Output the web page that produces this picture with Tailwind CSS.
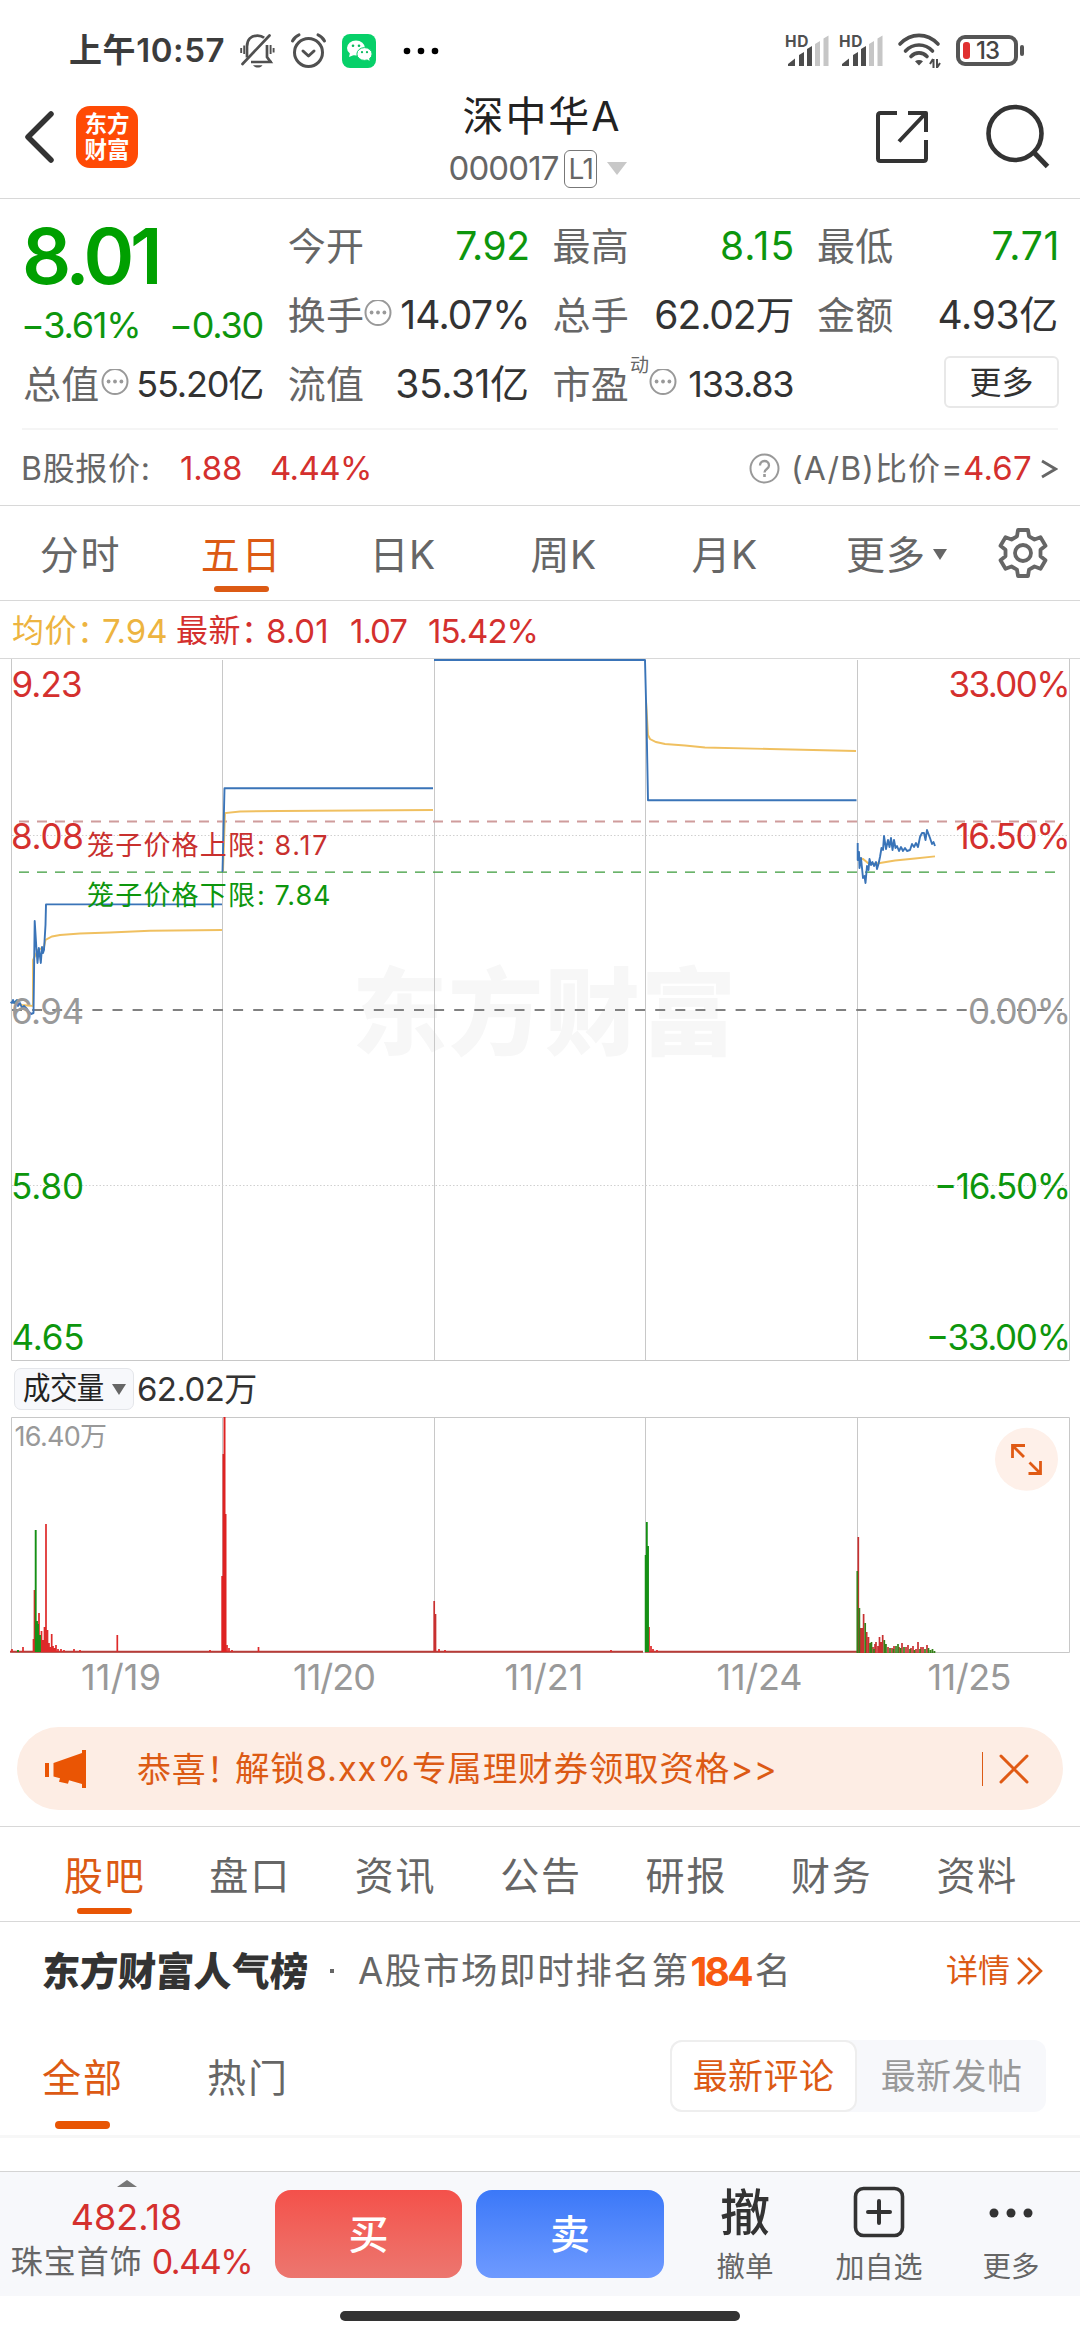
<!DOCTYPE html>
<html lang="zh-CN">
<head>
<meta charset="utf-8">
<meta name="viewport" content="width=1080">
<title>深中华A 000017</title>
<script src="https://cdn.jsdelivr.net/npm/@tailwindcss/browser@4"></script>
</head>
<body class="bg-white">
<div class="flex h-[2340px] w-[1080px] flex-col overflow-hidden whitespace-nowrap bg-white font-['Inter','Noto_Sans_CJK_SC',sans-serif] leading-none text-[#333]">

  <!-- status bar -->
  <div class="flex h-[90px] shrink-0 items-center pt-[11px]">
    <span class="ml-[69px] w-[170px] text-[33px] font-semibold tracking-[0.6px] text-[#3c3c3c]">上午10:57</span>
    <svg class="h-[36px] w-[36px]" viewBox="0 0 36 36" fill="none" stroke="#505050" stroke-width="2.7">
      <path d="M8 24.5V13.5C8 6.5 12 2.6 18.5 2.6c3 0 5 .8 6.6 2.2M28 12v12l3.6 5H13.5M33 29H12" />
      <path d="M30.5 2.5 3.5 31" stroke-linecap="round"/>
      <path d="M14 32.2h9.500c-1 1.500-2.600 2.300-4.700 2.300s-3.800-.8-4.800-2.300z" fill="#505050" stroke="none"/>
      <path d="M2.200 15v5M5.200 12.500v8.500M31.600 12v9M34.600 15v4.500" stroke-width="1.900"/>
    </svg>
    <svg class="ml-[15px] h-[37px] w-[37px]" viewBox="0 0 37 37" fill="none" stroke="#505050" stroke-width="3" stroke-linecap="round" stroke-linejoin="round">
      <circle cx="18.500" cy="20.500" r="14"/><path d="m13 19 5.500 5 5.500-5M2.500 9C4 6 6 4 9 2.800M34.500 9C33 6 31 4 28 2.800"/>
    </svg>
    <svg class="ml-[15px] h-[34px] w-[34px]" viewBox="0 0 34 34">
      <rect width="34" height="34" rx="8" fill="#07d069"/>
      <ellipse cx="14" cy="14" rx="9" ry="7.600" fill="#fff"/><path d="m8 19-1 4 5-2z" fill="#fff"/>
      <ellipse cx="22.500" cy="20" rx="7.600" ry="6.400" fill="#fff" stroke="#07d069" stroke-width="1"/><path d="m25 25 2.500 2-.5-3.500z" fill="#fff"/>
      <g fill="#07b95d"><circle cx="11" cy="11.700" r="1.300"/><circle cx="17" cy="11.700" r="1.300"/><circle cx="20" cy="18.200" r="1.100"/><circle cx="25" cy="18.200" r="1.100"/></g>
    </svg>
    <svg class="ml-[27px] h-[8px] w-[36px]" viewBox="0 0 36 8" fill="#000"><circle cx="4" cy="4" r="3.300"/><circle cx="18" cy="4" r="3.300"/><circle cx="32" cy="4" r="3.300"/></svg>
    <svg class="ml-[345px] h-[38px] w-[100px]" viewBox="-2 -3 100 38">
      <g id="sig">
        <text x="-1" y="12" font-size="15.500" font-weight="700" fill="#505050" textLength="23.500">HD</text>
        <path d="M2 31v-2l7-5.500V31zM13 31V20l5-3v14zM21 31V14l5-3v20z" fill="#4c4c4c"/>
        <path d="M29 31V9l5-3v25zM37.500 31V3.500l5-3V31z" fill="#c6c6c6"/>
      </g>
      <use href="#sig" x="54"/>
    </svg>
    <svg class="ml-[13px] h-[36px] w-[44px]" viewBox="0 0 44 36" fill="none" stroke="#4c4c4c" stroke-width="3.600" stroke-linecap="round">
      <path d="M3 11.500C14 0 30 0 41 11.500" transform="translate(0 -.5)"/><path d="M8.500 18c7.500-8 19.500-8 27 0M14 23.500c4.500-4.800 11.500-4.800 16 0"/>
      <path d="m22 32.500-4-4.200c2.400-1.900 5.600-1.900 8 0z" fill="#4c4c4c" stroke="none"/>
      <path d="M36.500 26v9M36 26l-3 5M40 35v-9M40.500 34l2.500-4" stroke-width="2" stroke-linecap="butt"/>
    </svg>
    <div class="ml-[15px] flex h-[31px] w-[62px] items-center rounded-[9px] border-4 border-[#555] pl-[3px]">
      <span class="h-[17px] w-[7px] rounded-[3px] bg-[#e03030]"></span>
      <span class="ml-[6px] text-[24px] font-medium tracking-[-0.9px] text-[#444]">13</span>
    </div>
    <span class="ml-[2px] h-[11px] w-[4px] rounded-[2px] bg-[#555]"></span>
  </div>

  <!-- title bar -->
  <div class="flex h-[109px] shrink-0 border-b border-[#d8d8d8]">
    <div class="flex h-[94px] w-[300px] items-center">
      <svg class="ml-[22px] h-[56px] w-[36px]" viewBox="0 0 36 56" fill="none" stroke="#333" stroke-width="5.500" stroke-linecap="round" stroke-linejoin="round"><path d="M29 5 6 28l23 23"/></svg>
      <div class="ml-[18px] flex h-[62px] w-[62px] flex-col items-center justify-center gap-[3px] rounded-[14px] bg-[#ff4a05] text-[22.5px] font-bold text-white"><span>东方</span><span>财富</span></div>
    </div>
    <div class="flex w-[480px] flex-col items-center">
      <div class="flex h-[52px] items-center pl-[4px] text-[41px] tracking-[1.9px] text-[#222]">深中华A</div>
      <div class="flex h-[53px] items-center pr-[4px]">
        <span class="text-[33px] tracking-[-0.9px] text-[#666]">000017</span>
        <span class="ml-[6px] flex h-[38px] w-[33px] items-center justify-center rounded-[6px] border border-[#777] text-[28px] tracking-[-0.5px] text-[#666]">L1</span>
        <svg class="ml-[10px] h-[13px] w-[20px]" viewBox="0 0 20 13"><path d="M0 0h20L10 13z" fill="#c8c8c8"/></svg>
      </div>
    </div>
    <div class="flex h-[94px] w-[300px] items-center">
      <svg class="ml-[94px] h-[56px] w-[56px]" viewBox="0 0 56 56" fill="none" stroke="#333" stroke-width="4"><path d="M23 4H6.500Q4 4 4 6.500v43Q4 52 6.500 52h43q2.500 0 2.500-2.500V31M34 4h18v19M51 5 25 32.500" stroke-linejoin="round"/></svg>
      <svg class="ml-[54px] h-[66px] w-[66px]" viewBox="0 0 66 66" fill="none" stroke="#333" stroke-width="4.600"><circle cx="31" cy="29.500" r="26.500"/><path d="m49.500 48 14 14.500" stroke-width="5"/></svg>
    </div>
  </div>

  <!-- quote -->
  <div class="grid h-[230px] shrink-0 grid-cols-[240px_240px_240px_240px] gap-x-[24.7px] pl-[23px] pt-[12px] text-[38px] tracking-[0.3px] text-[#666]">
    <div>
      <div class="-ml-px flex h-[90px] items-center text-[77px] font-semibold tracking-[-4.3px] text-[#00a000]">8.01</div>
      <div class="flex h-[48px] items-center justify-between text-[36px] tracking-[-1.2px] text-[#0d960d]"><span class="-ml-[2px]">−3.61%</span><span>−0.30</span></div>
      <div class="flex h-[69px] items-center"><span>总值</span>
        <svg class="ml-[1px] h-[29px] w-[28px]" viewBox="0 0 28 29"><circle cx="14" cy="12.500" r="12.500" fill="none" stroke="#999" stroke-width="2"/><g fill="#999"><circle cx="7.600" cy="12.500" r="1.900"/><circle cx="14" cy="12.500" r="1.900"/><circle cx="20.400" cy="12.500" r="1.900"/></g></svg>
        <span class="ml-auto text-[36px] tracking-[-1.2px] text-[#333]">55.20亿</span></div>
    </div>
    <div>
      <div class="flex h-[69px] items-center justify-between"><span>今开</span><span class="-mr-[2px] text-[39px] tracking-[-0.4px] text-[#0d960d]">7.92</span></div>
      <div class="flex h-[69px] items-center"><span>换手</span>
        <svg class="h-[29px] w-[28px]" viewBox="0 0 28 29"><circle cx="14" cy="12.500" r="12.500" fill="none" stroke="#999" stroke-width="2"/><g fill="#999"><circle cx="7.600" cy="12.500" r="1.900"/><circle cx="14" cy="12.500" r="1.900"/><circle cx="20.400" cy="12.500" r="1.900"/></g></svg>
        <span class="-mr-[2px] ml-auto text-[39px] tracking-[-0.8px] text-[#333]">14.07%</span></div>
      <div class="flex h-[69px] items-center justify-between"><span>流值</span><span class="-mr-px text-[39px] tracking-[-0.4px] text-[#333]">35.31亿</span></div>
    </div>
    <div>
      <div class="flex h-[69px] items-center justify-between"><span>最高</span><span class="-mr-[3px] text-[39px] tracking-[1.2px] text-[#0d960d]">8.15</span></div>
      <div class="flex h-[69px] items-center justify-between"><span>总手</span><span class="-mr-px text-[39px] tracking-[-1.1px] text-[#333]">62.02万</span></div>
      <div class="flex h-[69px] items-center"><span>市盈</span><span class="-mt-[36px] ml-px text-[19px]">动</span>
        <svg class="h-[29px] w-[28px]" viewBox="0 0 28 29"><circle cx="14" cy="12.500" r="12.500" fill="none" stroke="#999" stroke-width="2"/><g fill="#999"><circle cx="7.600" cy="12.500" r="1.900"/><circle cx="14" cy="12.500" r="1.900"/><circle cx="20.400" cy="12.500" r="1.900"/></g></svg>
        <span class="-mr-px ml-auto text-[36px] tracking-[-1.2px] text-[#333]">133.83</span></div>
    </div>
    <div>
      <div class="flex h-[69px] items-center justify-between"><span>最低</span><span class="-mr-[3px] text-[39px] tracking-[0.7px] text-[#0d960d]">7.71</span></div>
      <div class="flex h-[69px] items-center justify-between"><span>金额</span><span class="-mr-px text-[39px] tracking-[-0.3px] text-[#333]">4.93亿</span></div>
      <div class="flex h-[69px] items-center justify-end"><span class="-mr-[2px] -mt-[3px] flex h-[52px] w-[115px] items-center justify-center rounded-[6px] border-2 border-[#e8e8e8] pt-[2px] text-[32px] tracking-normal text-[#333]">更多</span></div>
    </div>
  </div>

  <!-- B share row -->
  <div class="mx-[22px] -mt-px h-[2px] shrink-0 bg-[#f5f5f5]"></div>
  <div class="flex h-[76px] shrink-0 items-center border-b border-[#d8d8d8] pt-[2px] text-[33px] text-[#666]">
    <span class="ml-[21px] w-[159px] text-[32px] tracking-[0.7px]">B股报价:</span>
    <span class="w-[90px] tracking-[-0.2px] text-[#d4302e]">1.88</span>
    <span class="tracking-[-0.6px] text-[#d4302e]">4.44%</span>
    <svg class="ml-auto h-[31px] w-[31px]" viewBox="0 0 31 31" fill="none" stroke="#999" stroke-width="2"><circle cx="15.500" cy="15.500" r="14"/><path d="M11 12.500c0-6 9-6 9 0 0 3.500-4.500 3.500-4.500 7" stroke-width="2.300"/><path d="M15.500 21v3" stroke-width="2.600"/></svg>
    <span class="ml-[11px] w-[172px] text-[32px] tracking-[1.1px]">(A/B)比价=</span>
    <span class="w-[77px] tracking-[0.2px] text-[#d4302e]">4.67</span>
    <svg class="mr-[22px] h-[24px] w-[18px]" viewBox="0 0 18 24" fill="none" stroke="#666" stroke-width="2.800"><path d="m2 4 13.500 8L2 20"/></svg>
  </div>

  <!-- period tabs -->
  <div class="flex h-[95px] shrink-0 items-center border-b border-[#d8d8d8] pt-[3px] text-[39px] tracking-[1.8px] text-[#666]">
    <div class="w-[161px] text-center">分时</div>
    <div class="relative w-[161px] text-center text-[#dc5a14]">五日<span class="absolute -bottom-[18px] left-[53px] h-[6px] w-[55px] rounded-full bg-[#dc5a14]"></span></div>
    <div class="w-[161px] text-center tracking-[0.5px]">日K</div>
    <div class="w-[161px] text-center tracking-[0.5px]">周K</div>
    <div class="w-[161px] text-center tracking-[0.5px]">月K</div>
    <div class="ml-[41px] tracking-[1px]">更多</div>
    <svg class="ml-[7px] h-[11px] w-[14px]" viewBox="0 0 14 11"><path d="M0 0h14L7 11z" fill="#666"/></svg>
    <svg class="-mt-[3px] ml-[51px] h-[50px] w-[50px]" viewBox="0 0 50 50" fill="none" stroke="#666" stroke-width="3.800" stroke-linejoin="round">
      <path d="M20 3.500h10l1 6.300 5.500 3.200 6-2.300 5 8.600-5 4v6.400l5 4-5 8.600-6-2.300-5.500 3.200-1 6.300H20l-1-6.300-5.500-3.200-6 2.300-5-8.600 5-4v-6.400l-5-4 5-8.600 6 2.300L19 9.800z" transform="translate(0 -1.500)"/><circle cx="25" cy="25" r="8"/>
    </svg>
  </div>

  <!-- latest values -->
  <div class="flex h-[57px] shrink-0 items-center pt-[3px] text-[33px] text-[#d4302e]">
    <span class="ml-[12px] w-[90px] text-[32px] tracking-[0.5px] text-[#edb440]">均价：</span><span class="w-[74px] text-[#edb440]">7.94</span>
    <span class="w-[90px] text-[32px] tracking-[0.5px]">最新：</span><span class="w-[84px]">8.01</span><span class="w-[78px] tracking-[-1px]">1.07</span><span class="tracking-[-1px]">15.42%</span>
  </div>

  <!-- price chart -->
  <svg class="h-[706px] w-[1080px] shrink-0" viewBox="0 658 1080 706">
    <text x="352" y="1048" class="fill-[#f7f7f7] text-[95px] font-black" textLength="384">东方财富</text>
    <g stroke="#c8c8c8" stroke-width="1" fill="none">
      <path d="M0 658.500h1080" stroke="#d8d8d8"/>
      <path d="M11.500 659V1360.500H1069.500V659M222.500 660V1360M434.500 660V1360M645.500 660V1360M857.500 660V1360"/>
      <path d="M12 835.500H1069M12 1185.500H1069" stroke-dasharray="1.500 2" stroke="#d0d0d0"/>
    </g>
    <path d="M12 1010H1062" stroke="#808080" stroke-width="2" stroke-dasharray="10 10.100" fill="none"/>
    <path d="M19 821.600H1055" stroke="#cf9c9c" stroke-width="2" stroke-dasharray="10 8" fill="none"/>
    <path d="M19 872.200H1055" stroke="#3a9a3a" stroke-width="1.300" stroke-dasharray="10 8" fill="none"/>
    <g fill="none" stroke="#f0c060" stroke-width="1.900">
      <path d="M12 1002 22 1005 33 1006V960L38 950 44 947 45.500 940 52 936.500 60 935 80 933.500 110 932.500 150 930.700 222 930"/>
      <path d="M223 872 225 813 240 811.500 280 811 433 810"/>
      <path d="M646 700 648 735 650 739 656 742 665 744 685 745.500 705 747.500 770 749 856 751"/>
      <path d="M858 858 863 859 868 863 874 864 880 863 895 860.500 915 858.500 935 856.400"/>
    </g>
    <g fill="none" stroke="#3a74b8" stroke-width="1.900" stroke-linejoin="round">
      <path d="M10.500 1002 12 1003 13 1000 14 1003 16 1001 17 1000 18 1006 20 1003 22 1008 24 1006 27 1009 29 1012 31 1014 33.500 1013 34.700 921 36.500 950 37.500 963 38.800 948 39.800 955 40.800 963 42 947 43 953 44 950 45.500 925 46 904.400H222"/>
      <path d="M222.500 872 224.500 788.300H433"/>
      <path d="M434 660H645L646.500 720 648 800.300H856.500" />
      <path d="M857.700 843V860L859 852 859.500 868 861 858 862 868 863 878 864.500 876 865.500 883 867 866 868.500 870 869.500 859 871 865 872.500 862 874 866 876 862 877 869 878.500 864 880 857 881.500 848 883 850 884 836 886 849 888 840 889.500 847 891 838 892.500 850 894 840 895.500 848 897 846 899 851 901 847 903 851 905 848 907 851 910 850 912 844 914 847 916 843 918 847 920 837 922 833 924 833 925.500 840 927 830 928.500 834 930 838 932 844 933.500 842 935 846"/>
    </g>
    <g class="text-[35px]">
      <g fill="#d4302e"><text x="11.500" y="697" textLength="71">9.23</text><text x="11" y="849" textLength="73">8.08</text><text x="948.500" y="697" textLength="122">33.00%</text><text x="955.500" y="849" textLength="115">16.50%</text></g>
      <g fill="#999"><text x="11" y="1024" textLength="73">6.94</text><text x="968" y="1024" textLength="103">0.00%</text></g>
      <g fill="#0d960d"><text x="11" y="1199" textLength="73">5.80</text><text x="934" y="1199" textLength="137">−16.50%</text><text x="11.500" y="1350" textLength="73">4.65</text><text x="926" y="1350" textLength="145">−33.00%</text></g>
    </g>
    <g class="text-[27px]">
      <g fill="#c8302e"><text x="87" y="855" textLength="168">笼子价格上限</text><text x="257" y="855">:</text><text x="274.500" y="855" textLength="53">8.17</text></g>
      <g fill="#0d960d"><text x="87" y="905" textLength="168">笼子价格下限</text><text x="257" y="905">:</text><text x="274.500" y="905" textLength="56">7.84</text></g>
    </g>
  </svg>

  <!-- volume selector -->
  <div class="flex h-[50px] shrink-0 items-center">
    <div class="ml-[14px] flex h-[42px] w-[120px] items-center rounded-[7px] border border-[#e4e6ea] bg-[#f7f8fb] pl-[8px]">
      <span class="scale-y-110 text-[27.5px] tracking-[-0.6px] text-[#222]">成交量</span>
      <svg class="ml-[8px] h-[11px] w-[14px]" viewBox="0 0 14 11"><path d="M0 0h14L7 11z" fill="#666"/></svg>
    </div>
    <span class="ml-[3px] text-[33px] tracking-[-0.6px]">62.02万</span>
  </div>

  <!-- volume chart -->
  <svg class="h-[313px] w-[1080px] shrink-0" viewBox="0 1414 1080 313">
    <g stroke="#c8c8c8" stroke-width="1" fill="none"><path d="M11.500 1417.500H1069.500V1652.500H11.500zM222.500 1418V1652M434.500 1418V1652M645.500 1418V1652M857.500 1418V1652"/></g>
    <text x="14.500" y="1446" fill="#999" class="text-[27px]" textLength="92.500">16.40万</text>
    <path d="M10 1651.800H643M645 1651.800H858" stroke="#b83c38" stroke-width="2"/>
    <g fill="none" stroke-width="1.700">
      <path stroke="#de2a2a" d="M12 1652V1649M23 1652V1647M33.500 1652V1639M34.500 1652V1590M39 1652V1613M41.500 1652V1631M43 1652V1640M44.500 1652V1627M46 1652V1524M47.500 1652V1630M49 1652V1643M50.500 1652V1647M51.700 1652V1634M53 1652V1646M54.500 1652V1648M56 1652V1645M58 1652V1649M61 1652V1649M64 1652V1650M74 1652V1649M80 1652V1650M117.300 1652V1635M210 1652V1650M258.500 1652V1647M227 1652V1645M229 1652V1648M232 1652V1650M439 1652V1649M445 1652V1650M611 1652V1650M649 1652V1627M651 1652V1646M653 1652V1649M657 1652V1650"/>
      <path stroke="#de2222" stroke-width="2" d="M222.300 1652V1576M223.500 1652V1454M224.500 1652V1417M225.500 1652V1514"/>
      <path stroke="#c83030" d="M434.200 1652V1601M435.500 1652V1614"/>
      <path stroke="#159015" stroke-width="1.900" d="M18 1652V1650M35.700 1652V1530M37 1652V1621M38 1652V1624M40 1652V1635M645.700 1652V1555M646.800 1652V1522M648 1652V1546"/>
      <path stroke="#c83030" d="M858.300 1653V1537M860.500 1653V1628M862 1653V1628M863.600 1653V1614M866.700 1653V1632M868.500 1653V1637M873 1653V1647M875 1653V1644M876 1653V1642M878 1653V1646M879.500 1653V1637M881 1653V1642M882.700 1653V1635M888 1653V1647M892 1653V1648M894 1653V1646M899 1653V1647M902 1653V1643M906 1653V1647M908 1653V1645M911 1653V1648M913 1653V1646M916 1653V1649M918 1653V1642M921 1653V1647M923 1653V1647M927 1653V1645"/>
      <path stroke="#358018" d="M857.300 1653V1571M859.400 1653V1608M865.200 1653V1623M870 1653V1643M871.500 1653V1642M874 1653V1649M884.300 1653V1640M886 1653V1644M890 1653V1648M893.500 1653V1649M896 1653V1646M898 1653V1644M900.500 1653V1648M904 1653V1647M910 1653V1649M914.500 1653V1650M920 1653V1649M925 1653V1649M928.500 1653V1648M930.500 1653V1650M932.500 1653V1649M934.500 1653V1651"/>
    </g>
    <g fill="#999" class="text-[36px]">
      <text x="81" y="1690" textLength="80">11/19</text><text x="293" y="1690" textLength="83">11/20</text><text x="504.500" y="1690" textLength="79">11/21</text><text x="716.500" y="1690" textLength="86">11/24</text><text x="927.500" y="1690" textLength="84">11/25</text>
    </g>
    <circle cx="1026.500" cy="1459.300" r="31.500" fill="#fef0e9"/>
    <path d="M1025 1445.500H1012.500V1458M1013 1446 1024 1457M1028.500 1473.500H1040.500V1461M1040 1473 1029.500 1462.500" fill="none" stroke="#e05a14" stroke-width="2.800"/>
  </svg>

  <!-- promo banner -->
  <div class="mx-[17px] flex h-[83px] shrink-0 items-center rounded-full bg-[#fdede4] text-[#dc5a14]">
    <svg class="ml-[28px] h-[38px] w-[42px]" viewBox="0 0 42 38" fill="#ea5504"><path d="M0 13h4v14H0zM8.500 13 37 3V0h4v38h-4v-4l-13-3.800-1 3.500-9-2 1-3.500-6.500-1.700z"/></svg>
    <span class="ml-[50px] w-[98px] pt-[2px] text-[34px] tracking-[0.75px]">恭喜！</span>
    <span class="pt-[2px] text-[34.5px] tracking-[0.85px]">解锁8.xx%专属理财券领取资格&gt;&gt;</span>
    <span class="ml-auto h-[34px] w-px bg-[#dc5a14]"></span>
    <svg class="ml-[15px] mr-[33px] h-[32px] w-[32px]" viewBox="0 0 32 32" fill="none" stroke="#e05a14" stroke-width="3" stroke-linecap="round"><path d="m3 3 26 26M29 3 3 29"/></svg>
  </div>

  <!-- section tabs -->
  <div class="mt-[16px] flex h-[96px] shrink-0 items-center border-y border-[#d8d8d8] pl-[32px] pr-[30px] pt-[3px] text-[39px] tracking-[1.8px] text-[#666]">
    <div class="relative flex-1 text-center text-[#dc5a14]">股吧<span class="absolute -bottom-[19px] left-[45px] h-[6px] w-[55px] rounded-full bg-[#e85504]"></span></div>
    <div class="flex-1 text-center">盘口</div><div class="flex-1 text-center">资讯</div><div class="flex-1 text-center">公告</div><div class="flex-1 text-center">研报</div><div class="flex-1 text-center">财务</div><div class="flex-1 text-center">资料</div>
  </div>

  <!-- popularity rank -->
  <div class="flex h-[98px] shrink-0 items-center text-[#666]">
    <span class="ml-[42px] w-[282px] -skew-x-3 scale-y-105 text-[38px] font-black text-[#333]">东方财富人气榜</span>
    <span class="ml-[6px] h-[4px] w-[4px] bg-[#666]"></span>
    <span class="ml-[24px] text-[36.5px] tracking-[1.600px]">A股市场即时排名第</span>
    <span class="ml-px text-[39px] font-bold tracking-[-2.800px] text-[#f85a10]">184</span>
    <span class="ml-[4px] text-[36px]">名</span>
    <span class="ml-auto text-[32px] text-[#dc5a14]">详情</span>
    <svg class="ml-[6px] mr-[36px] h-[30px] w-[28px]" viewBox="0 0 28 30" fill="none" stroke="#dc5a14" stroke-width="2.600"><path d="m2 2 13 13L2 28M12 2l13 13-13 13"/></svg>
  </div>

  <!-- comment filters -->
  <div class="flex h-[115px] shrink-0 items-center text-[39px] tracking-[2px] text-[#666]">
    <div class="relative ml-[42px] text-[#dc5a14]">全部<span class="absolute -bottom-[32px] left-[13px] h-[8px] w-[55px] rounded-full bg-[#e85504]"></span></div>
    <div class="ml-[83px]">热门</div>
    <div class="-mt-[3px] ml-auto mr-[34px] flex h-[72px] w-[376px] rounded-[12px] bg-[#f7f8fb] text-[35px] tracking-[0.4px]">
      <span class="flex w-[187px] items-center justify-center rounded-[12px] border-2 border-[#eeeeee] bg-white text-[#dc5a14]">最新评论</span>
      <span class="flex flex-1 items-center justify-center text-[#999]">最新发帖</span>
    </div>
  </div>
  <div class="h-[3px] shrink-0 bg-[#f7f7f7]"></div>

  <!-- trade bar -->
  <div class="mt-[33px] flex h-[125px] shrink-0 border-t border-[#d4d4d4] bg-[#f7f8fb]">
    <div class="flex w-[253px] flex-col items-center text-[#d4302e]">
      <svg class="mt-[8px] h-[7px] w-[20px]" viewBox="0 0 20 7"><path d="M0 7 10 0l10 7z" fill="#777"/></svg>
      <div class="mt-[12px] text-[36px]">482.18</div>
      <div class="mt-[10px] flex items-center pl-[10px]"><span class="text-[32px] tracking-[1px] text-[#666]">珠宝首饰</span><span class="ml-[9px] text-[34px] tracking-[-1.400px]">0.44%</span></div>
    </div>
    <div class="ml-[22px] mt-[18px] flex h-[88px] w-[187px] items-center justify-center rounded-[16px] bg-linear-to-b from-[#f4504a] to-[#ec766f] pt-[2px] text-[40px] font-medium text-white">买</div>
    <div class="ml-[14px] mt-[18px] flex h-[88px] w-[188px] items-center justify-center rounded-[16px] bg-linear-to-b from-[#3b78f8] to-[#6e9aff] pt-[2px] text-[40px] font-medium text-white">卖</div>
    <div class="ml-[20px] flex w-[122px] flex-col items-center text-[28.500px] text-[#666]"><span class="flex h-[81px] items-center text-[50px] font-medium text-[#333]">撤</span><span>撤单</span></div>
    <div class="flex w-[146px] flex-col items-center text-[29px] text-[#666]">
      <span class="flex h-[81px] items-center pb-px"><svg class="h-[52px] w-[52px]" viewBox="0 0 52 52" fill="none" stroke="#333" stroke-width="3.600" stroke-linecap="round"><rect x="2.500" y="2.500" width="47" height="47" rx="8"/><path d="M15 26h22M26 15v22" stroke-width="4"/></svg></span><span>加自选</span></div>
    <div class="flex flex-1 flex-col items-center pr-[10px] text-[28.500px] text-[#666]">
      <span class="flex h-[81px] items-center"><svg class="h-[10px] w-[44px]" viewBox="0 0 44 10" fill="#333"><circle cx="5" cy="5" r="4.500"/><circle cx="22" cy="5" r="4.500"/><circle cx="39" cy="5" r="4.500"/></svg></span><span>更多</span></div>
  </div>
  <div class="mx-auto mt-[15px] h-[10px] w-[400px] shrink-0 rounded-full bg-[#333]"></div>
</div>
</body>
</html>
